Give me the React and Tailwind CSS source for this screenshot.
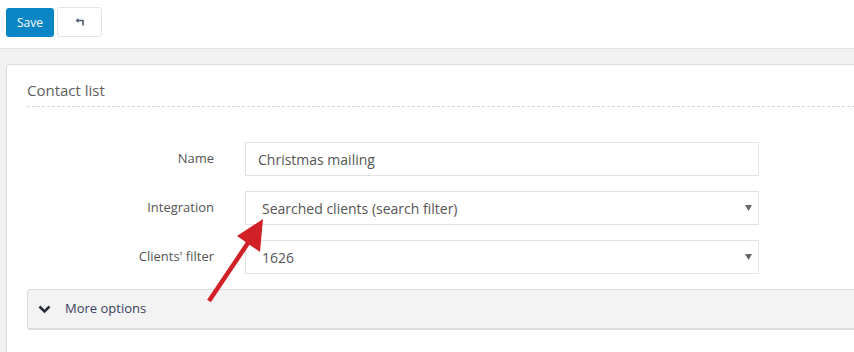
import React from 'react';

const rows = [
  { label: 'Name', value: 'Christmas mailing', select: false },
  { label: 'Integration', value: 'Searched clients (search filter)', select: true },
  { label: "Clients' filter", value: '1626', select: true },
];

export default function App() {
  return (
    <div className="h-[352px] w-[854px] overflow-hidden bg-[#f1f1f1] text-[#555]" style={{ fontFamily: '"Open Sans", "Liberation Sans", sans-serif' }}>
      {/* Toolbar */}
      <div className="flex h-[49px] items-start gap-[3px] border-b border-[#e3e3e3] bg-white pl-[6px] pt-[7px]">
        <button className="mt-[1px] h-[29px] w-[48px] rounded-[3px] bg-[#0a86c6] text-[12px] font-medium text-white">
          Save
        </button>
        <button className="flex h-[30px] w-[45px] items-center justify-center rounded-[3px] border border-[#e4e4e4] bg-white">
          <svg width="10" height="8" viewBox="0 0 10 8">
            <path d="M0.5 2.5 L3.5 0 L3.5 5 Z" fill="#4b5874" />
            <path d="M3 2.5 H8 V7.5" fill="none" stroke="#4b5874" strokeWidth="1.6" />
          </svg>
        </button>
      </div>

      {/* Card */}
      <div className="ml-[6px] mt-[15px] h-[320px] w-[880px] rounded-[3px] border border-[#dcdcdc] bg-white pl-[20px] pt-[15px]">
        <div className="border-b border-dashed border-[#d6d6d6] pb-[6px] text-[15px] leading-[20px] text-[#606060]">
          Contact list
        </div>

        <div className="mt-[35px] flex flex-col gap-[15px]">
          {rows.map((r) => (
            <div key={r.label} className="flex items-center">
              <div className="w-[187px] text-right text-[13px] text-[#555]">{r.label}</div>
              <div className={`ml-[31px] flex h-[34px] w-[514px] items-center justify-between border border-[#e2e2e2] bg-white text-[14px] text-[#555] ${r.select ? 'pl-[16px] pr-[6px]' : 'pl-[12px]'}`}>
                <span>{r.value}</span>
                {r.select && (
                  <svg width="7" height="6" viewBox="0 0 7 6">
                    <path d="M0 0 H7 L3.5 6 Z" fill="#666" />
                  </svg>
                )}
              </div>
            </div>
          ))}
        </div>

        {/* More options */}
        <div className="mt-[15px] flex h-[41px] items-center rounded-l-[3px] border border-b-2 border-[#dcdcdc] bg-[#f3f3f3] pl-[10px]">
          <svg width="13" height="9" viewBox="0 0 13 9">
            <path d="M1.5 1.5 L6.5 6.5 L11.5 1.5" fill="none" stroke="#2a2e3c" strokeWidth="2.6" />
          </svg>
          <span className="ml-[14px] text-[13px] text-[#3b4060]">More options</span>
        </div>
      </div>

      {/* Red annotation arrow */}
      <svg className="pointer-events-none absolute left-0 top-0" width="854" height="352">
        <line x1="209" y1="301" x2="250" y2="240" stroke="#d22027" strokeWidth="4.5" strokeLinecap="butt" />
        <path d="M263 219 L237 236 L260 252 Z" fill="#d22027" />
      </svg>
    </div>
  );
}
